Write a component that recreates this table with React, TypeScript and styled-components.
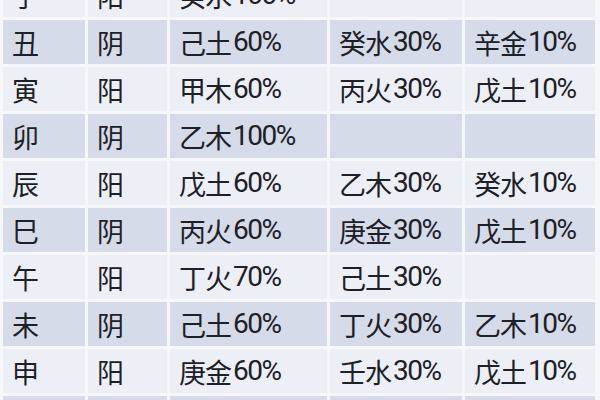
import styled, { createGlobalStyle } from "styled-components";

type Row = {
  branch: string;
  yin: string;
  qi: string[];
};

const rows: Row[] = [
  { branch: "子", yin: "阳", qi: ["癸水100%"] },
  { branch: "丑", yin: "阴", qi: ["己土60%", "癸水30%", "辛金10%"] },
  { branch: "寅", yin: "阳", qi: ["甲木60%", "丙火30%", "戊土10%"] },
  { branch: "卯", yin: "阴", qi: ["乙木100%"] },
  { branch: "辰", yin: "阳", qi: ["戊土60%", "乙木30%", "癸水10%"] },
  { branch: "巳", yin: "阴", qi: ["丙火60%", "庚金30%", "戊土10%"] },
  { branch: "午", yin: "阳", qi: ["丁火70%", "己土30%"] },
  { branch: "未", yin: "阴", qi: ["己土60%", "丁火30%", "乙木10%"] },
  { branch: "申", yin: "阳", qi: ["庚金60%", "壬水30%", "戊土10%"] },
  { branch: "酉", yin: "阴", qi: ["辛金100%"] },
];

const GlobalStyle = createGlobalStyle`
  html, body {
    margin: 0;
    padding: 0;
    background: #f6f7fb;
  }
  body {
    font-family: Roboto, "Noto Sans CJK SC", sans-serif;
    overflow: hidden;
  }
`;

const Page = styled.div`
  width: 600px;
  height: 400px;
  overflow: hidden;
  background: #f6f7fb;
`;

const Table = styled.div`
  display: grid;
  grid-template-columns: 82px 79px 157px 132px 130px;
  grid-auto-rows: 44px;
  column-gap: 3px;
  row-gap: 3px;
  margin: -27px 0 0 3px;
`;

const Cell = styled.div<{ $dark: boolean }>`
  display: flex;
  align-items: center;
  padding-left: 9px;
  background: ${(p) => (p.$dark ? "#d5dbe8" : "#eceff6")};
  color: #1d2026;
  font-size: 27px;
  line-height: 1;
  white-space: nowrap;
`;

const Han = styled.span`
  font-family: "Noto Sans CJK SC", sans-serif;
  letter-spacing: -1px;
`;

const Num = styled.span`
  font-family: Roboto, sans-serif;
  font-size: 28px;
  letter-spacing: -1.5px;
  margin-left: 2px;
`;

function Qi({ text }: { text: string }) {
  const m = text.match(/^(\D+)(\d+%)$/);
  if (!m) return <Han>{text}</Han>;
  return (
    <>
      <Han>{m[1]}</Han>
      <Num>{m[2]}</Num>
    </>
  );
}

export default function App() {
  return (
    <Page>
      <GlobalStyle />
      <Table>
        {rows.map((r, i) => {
          const dark = i % 2 === 1;
          return [
            <Cell key={`${i}-b`} $dark={dark}><Han>{r.branch}</Han></Cell>,
            <Cell key={`${i}-y`} $dark={dark}><Han>{r.yin}</Han></Cell>,
            ...[0, 1, 2].map((k) => (
              <Cell key={`${i}-${k}`} $dark={dark}>
                {r.qi[k] ? <Qi text={r.qi[k]} /> : null}
              </Cell>
            )),
          ];
        })}
      </Table>
    </Page>
  );
}
